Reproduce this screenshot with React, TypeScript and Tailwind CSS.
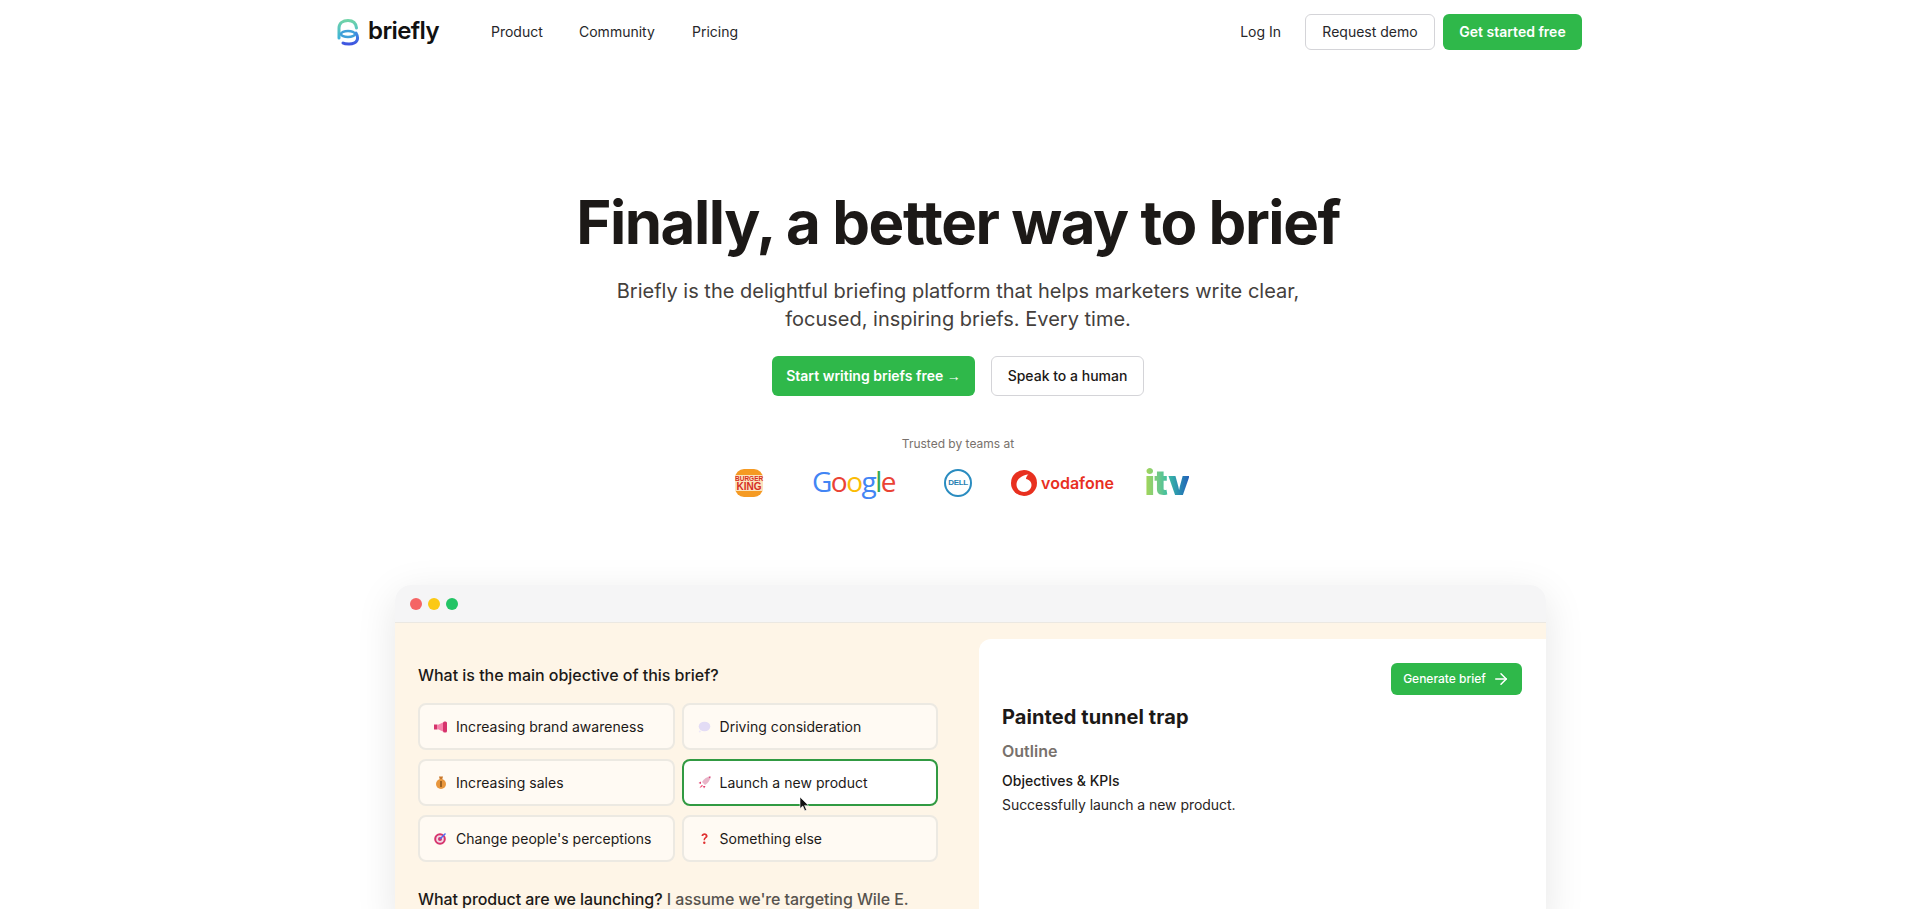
import React from 'react';
import { ArrowRight } from 'lucide-react';

const navLinks = [
  { label: 'Product', cls: 'w-[88px]' },
  { label: 'Community', cls: 'w-[113px]' },
  { label: 'Pricing', cls: '' },
];

const BriefEmoji = ({ kind }: { kind: string }) => {
  if (kind === 'megaphone') {
    return (
      <svg width="13" height="12" viewBox="0 0 13 12">
        <rect x="0" y="3.500" width="3.500" height="5" fill="#d6336c" />
        <path d="M3.500 4 9 1.500v9L3.500 8z" fill="#f783ac" />
        <rect x="9" y="0.500" width="4" height="11" rx="1.500" fill="#d6336c" />
      </svg>
    );
  }
  if (kind === 'bubble') {
    return (
      <svg width="13" height="12" viewBox="0 0 13 12">
        <ellipse cx="6.500" cy="5.500" rx="5.800" ry="4.800" fill="#e3dcf5" />
        <circle cx="1.800" cy="10.500" r="1" fill="#eee9f9" />
      </svg>
    );
  }
  if (kind === 'money') {
    return (
      <svg width="12" height="13" viewBox="0 0 12 13">
        <path d="M4 .5h4L7.200 3.500H4.800z" fill="#c9782c" />
        <circle cx="6" cy="8" r="5" fill="#e8963c" />
        <rect x="5.400" y="5" width="1.200" height="6" fill="#6b3f12" />
      </svg>
    );
  }
  if (kind === 'rocket') {
    return (
      <svg width="13" height="13" viewBox="0 0 13 13">
        <path d="M12.500.5C9 .8 6 2.400 4 6l3 3c3.600-2 5.200-5 5.500-8.500z" fill="#e8b4c8" />
        <path d="M3 5.500.5 7l2.500 1zM7.500 10 6 12.500 5 10z" fill="#e03e6f" />
        <path d="M4 9c-1 .5-2 2-2.500 3C3 11.500 4.500 10.500 5 9.500z" fill="#f05a7e" />
        <path d="M10.500.8 12.500.5l-.3 2z" fill="#d6336c" />
      </svg>
    );
  }
  if (kind === 'target') {
    return (
      <svg width="13" height="13" viewBox="0 0 13 13">
        <circle cx="6" cy="7" r="5.800" fill="#d6336c" />
        <circle cx="6" cy="7" r="3.800" fill="#f3d9e5" />
        <circle cx="6" cy="7" r="2" fill="#d6336c" />
        <path d="M6 7 11.500 1.500" stroke="#4c6ef5" strokeWidth="1.500" />
      </svg>
    );
  }
  return (
    <svg width="9" height="13" viewBox="0 0 9 13">
      <path d="M1.500 4C1.500 2.200 3 1.200 4.500 1.200S7.600 2.300 7.600 4C7.600 6 5 6 5 8.200H3.600C3.600 5.500 5.700 5.400 5.700 4c0-.7-.5-1.100-1.200-1.100S3.300 3.300 3.300 4z" fill="#e03131" />
      <circle cx="4.300" cy="10.800" r="1.200" fill="#e03131" />
    </svg>
  );
};

const options = [
  { emoji: 'megaphone', label: 'Increasing brand awareness' },
  { emoji: 'bubble', label: 'Driving consideration' },
  { emoji: 'money', label: 'Increasing sales' },
  { emoji: 'rocket', label: 'Launch a new product', active: true },
  { emoji: 'target', label: "Change people's perceptions" },
  { emoji: 'question', label: 'Something else' },
];

const Logo = () => (
  <svg width="24" height="30" viewBox="0 0 24 30" fill="none">
    <defs>
      <linearGradient id="lg1" x1="0" y1="0" x2="0" y2="1">
        <stop offset="0" stopColor="#6fd3a8" />
        <stop offset="1" stopColor="#3fb4d8" />
      </linearGradient>
      <linearGradient id="lg2" x1="0" y1="0" x2="0" y2="1">
        <stop offset="0" stopColor="#3f8ee0" />
        <stop offset="1" stopColor="#3f54e0" />
      </linearGradient>
    </defs>
    <path d="M3 21V11C3 6 7 3.500 12 3.500 17 3.500 20 6 20.500 11" stroke="url(#lg1)" strokeWidth="3" strokeLinecap="round" />
    <ellipse cx="12" cy="17" rx="7" ry="3" stroke="#3f9fd8" strokeWidth="2.600" />
    <path d="M20 16C23 21 22 27 13 27 10.500 27 8.500 27 7 26" stroke="url(#lg2)" strokeWidth="3" strokeLinecap="round" />
  </svg>
);

const TrustedLogos = () => (
  <div className="flex items-center justify-center mt-[14px] h-[34px]">
    <div className="w-[104px] flex justify-center">
      <div className="relative w-[28px] h-[28px]">
        <div className="absolute left-0 top-0 w-[28px] h-[28px] rounded-[9px] bg-[#f59a23]" />
        <div className="absolute left-0 top-[6px] w-[28px] h-[16px] bg-[#fbe3bd]" />
        <div className="absolute left-0 top-[6px] w-[28px] text-center font-['Liberation_Sans',sans-serif] font-bold text-[6.500px] leading-[7px] text-[#d62e1f]">
          BURGER
          <br />
          <span className="text-[10px] leading-[9px]">KING</span>
        </div>
      </div>
    </div>
    <div className="w-[105px] flex justify-center font-['Open_Sans',sans-serif] font-medium text-[28px] leading-none tracking-[-1.500px] -translate-y-[2px]">
      <span className="text-[#4285f4]">G</span>
      <span className="text-[#ea4335]">o</span>
      <span className="text-[#fbbc05]">o</span>
      <span className="text-[#4285f4]">g</span>
      <span className="text-[#34a853]">l</span>
      <span className="text-[#ea4335]">e</span>
    </div>
    <div className="w-[104px] flex justify-center">
      <div className="w-[28px] h-[28px] rounded-full border-2 border-[#2a8cc0] flex items-center justify-center font-['Liberation_Sans',sans-serif] font-bold text-[8px] tracking-[-0.3px] text-[#1f7fb2]">
        DELL
      </div>
    </div>
    <div className="w-[105px] flex justify-center items-center gap-[4px]">
      <svg width="26" height="26" viewBox="0 0 26 26">
        <circle cx="13" cy="13" r="13" fill="#e8301f" />
        <path d="M17.500 4.500C11 5 5.500 9 5.500 14.500 5.500 19 9 22 13 22 17 22 20.500 19 20.500 15 20.500 11.500 18 9.500 15 9 15 7.200 16.200 5.500 17.500 4.500z" fill="#fff" />
      </svg>
      <span className="font-['Inter',sans-serif] font-semibold text-[16px] leading-none text-[#e8301f]">vodafone</span>
    </div>
    <div className="w-[104px] flex justify-center">
      <span className="font-['Inter',sans-serif] font-black text-[34px] leading-none tracking-[-0.5px] bg-gradient-to-r from-[#a6d651] via-[#3fbfa0] to-[#2560b8] bg-clip-text text-transparent">
        itv
      </span>
    </div>
  </div>
);

export default function App() {
  return (
    <div className="h-[909px] overflow-hidden bg-white font-['Inter',sans-serif] text-[#1c1917]">
      {/* Nav */}
      <nav className="w-[1246px] ml-[336px] pt-[14px] flex items-center justify-between">
        <div className="flex items-center">
          <div className="flex items-center w-[155px] gap-[8px]">
            <Logo />
            <span className="text-[24px] font-semibold leading-none tracking-[-0.6px] text-[#111] -translate-y-px">briefly</span>
          </div>
          {navLinks.map(link => (
            <a key={link.label} className={`${link.cls} text-sm text-[#27272a]`}>
              {link.label}
            </a>
          ))}
        </div>
        <div className="flex items-center gap-[8px]">
          <a className="text-sm text-[#27272a] mr-[16px]">Log In</a>
          <button className="w-[130px] h-[36px] rounded-md border border-[#d4d4d8] bg-white text-sm text-[#27272a]">Request demo</button>
          <button className="w-[139px] h-[36px] rounded-md bg-[#2fb84a] text-sm font-semibold text-white">Get started free</button>
        </div>
      </nav>

      {/* Hero */}
      <section className="flex flex-col items-center text-center pt-[136px]">
        <h1 className="text-[60px] leading-[72px] font-bold tracking-[-1.45px] text-[#1c1917]">Finally, a better way to brief</h1>
        <p className="mt-[19px] w-[720px] text-[20px] leading-[28px] text-[#44403c]">
          Briefly is the delightful briefing platform that helps marketers write clear,
          <br />
          focused, inspiring briefs. Every time.
        </p>
        <div className="mt-[23px] flex gap-[16px]">
          <button className="w-[203px] h-[40px] rounded-md bg-[#2fb84a] text-sm font-semibold text-white">
            Start writing briefs free <span className="font-['Liberation_Sans',sans-serif] font-normal">→</span>
          </button>
          <button className="w-[153px] h-[40px] rounded-md border border-[#d4d4d8] bg-white text-sm font-medium text-[#1c1917]">Speak to a human</button>
        </div>
        <p className="mt-[40px] text-xs leading-[16px] text-[#78716c]">Trusted by teams at</p>
        <TrustedLogos />
      </section>

      {/* Product window */}
      <section className="relative w-[1151px] ml-[395px] mt-[85px] rounded-t-[16px] shadow-[0_10px_40px_rgba(0,0,0,0.1)] overflow-hidden">
        <div className="h-[38px] bg-[#f5f5f6] border-b border-[#ebe8e2] flex items-center gap-[6px] pl-[15px]">
          <span className="w-[12px] h-[12px] rounded-full bg-[#f56565]" />
          <span className="w-[12px] h-[12px] rounded-full bg-[#fbc914]" />
          <span className="w-[12px] h-[12px] rounded-full bg-[#22c465]" />
        </div>
        <div className="flex bg-[#fef5e7] h-[300px]">
          <div className="w-[584px] pl-[23px] pt-[40px]">
            <p className="text-base leading-[24px] font-medium tracking-[-0.03px] text-[#1c1917]">What is the main objective of this brief?</p>
            <div className="mt-[16px] grid grid-cols-2 gap-x-[7px] gap-y-[9px] w-[520px]">
              {options.map(opt => (
                <div
                  key={opt.label}
                  className={`h-[47px] rounded-lg border-2 flex items-center text-sm tracking-[0.04px] pl-[14px] ${
                    opt.active ? 'border-[#319a42] bg-white' : 'border-[#ece9e2] bg-[#fffaf3]'
                  }`}
                >
                  <span className="w-[13px] flex justify-center mr-[9px]">
                    <BriefEmoji kind={opt.emoji} />
                  </span>
                  {opt.label}
                </div>
              ))}
            </div>
            <p className="mt-[25px] text-base leading-[24px] font-medium tracking-[-0.08px] whitespace-nowrap">
              What product are we launching? <span className="text-[#57534e]">I assume we're targeting Wile E.</span>
            </p>
          </div>
          <div className="flex-1 mt-[16px] bg-white rounded-tl-[12px] pl-[23px] pr-[24px] pt-[24px]">
            <div className="flex justify-end">
              <button className="w-[131px] h-[32px] rounded-md bg-[#2fb84a] text-white text-xs font-medium flex items-center justify-center gap-[6px]">
                Generate brief
                <ArrowRight className="w-[18px] h-[18px]" />
              </button>
            </div>
            <h2 className="mt-[8px] text-[20px] leading-[28px] font-bold tracking-[0.1px] text-[#1c1917]">Painted tunnel trap</h2>
            <h3 className="mt-[8px] text-base leading-[24px] font-semibold text-[#78716c]">Outline</h3>
            <p className="mt-[8px] text-sm leading-[20px] font-medium text-[#1c1917]">Objectives &amp; KPIs</p>
            <p className="mt-[4px] text-sm leading-[20px] tracking-[-0.05px] text-[#292524]">Successfully launch a new product.</p>
          </div>
        </div>
        {/* mouse pointer */}
        <svg className="absolute left-[404px] top-[212px]" width="10" height="15" viewBox="0 0 10 15">
          <path d="M1 0v11.500l2.800-2.500 2 4.800 1.800-.8-2-4.600H9.500z" fill="#111" stroke="#fff" strokeWidth="0.600" />
        </svg>
      </section>
    </div>
  );
}
